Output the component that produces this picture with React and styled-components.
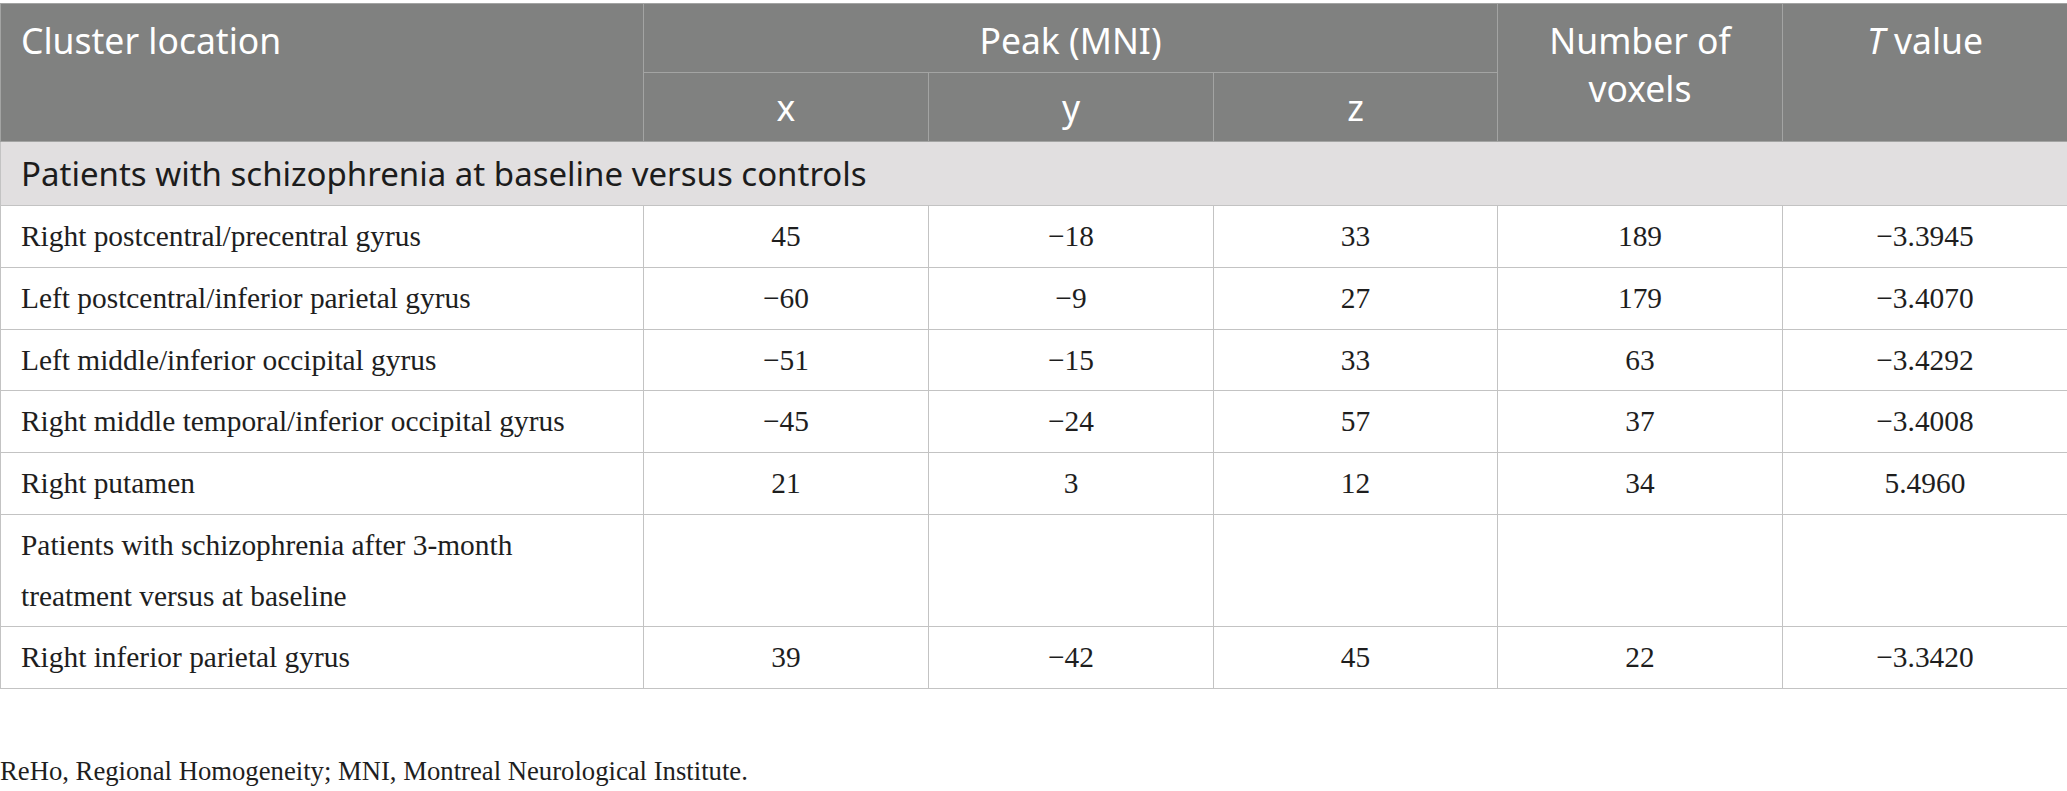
import React from "react";
import styled, {createGlobalStyle} from "styled-components";

const GlobalStyle = createGlobalStyle`
  html, body {
    margin: 0;
    padding: 0;
    background: #ffffff;
  }
`

const Page = styled.div`
  width: 2067px;
  padding-top: 3px;
`

const Table = styled.table`
  width: 2067px;
  border-collapse: collapse;
  table-layout: fixed;
`

const HeadCell = styled.th`
  background-color: #808180;
  color: #ffffff;
  font-family: "Noto Sans", "Open Sans", sans-serif;
  font-weight: 400;
  font-size: 35.5px;
  line-height: 48px;
  text-align: ${props => props.$left ? "left" : "center"};
  vertical-align: ${props => props.$middle ? "middle" : "top"};
  padding: ${props => props.$middle ? "0 20px" : "12px 20px 8px"};
  height: ${props => props.$middle ? "68px" : "auto"};
  border: 1px solid #a3a4a3;

  em {
    font-style: italic;
  }
`

const SectionCell = styled.td`
  background-color: #e1dfe0;
  color: #1c1c1c;
  font-family: "Noto Sans", "Open Sans", sans-serif;
  font-size: 33px;
  line-height: 45px;
  padding: 9px 20px;
  border: 1px solid #c3c3c3;
  text-align: left;
`

const Cell = styled.td`
  font-family: "Liberation Serif", "Times New Roman", serif;
  font-size: 29.4px;
  line-height: 50.75px;
  color: #1e1e1e;
  padding: 5px 20px;
  border: 1px solid #c3c3c3;
  text-align: ${props => props.$left ? "left" : "center"};
  vertical-align: middle;
`

const Footnote = styled.p`
  margin: 66px 0 0;
  font-family: "Liberation Serif", "Times New Roman", serif;
  font-size: 26.7px;
  line-height: 32px;
  color: #1e1e1e;
`

const rows = [
    ["Right postcentral/precentral gyrus", "45", "\u221218", "33", "189", "\u22123.3945"],
    ["Left postcentral/inferior parietal gyrus", "\u221260", "\u22129", "27", "179", "\u22123.4070"],
    ["Left middle/inferior occipital gyrus", "\u221251", "\u221215", "33", "63", "\u22123.4292"],
    ["Right middle temporal/inferior occipital gyrus", "\u221245", "\u221224", "57", "37", "\u22123.4008"],
    ["Right putamen", "21", "3", "12", "34", "5.4960"],
    [<>Patients with schizophrenia after 3-month<br/>treatment versus at baseline</>, "", "", "", "", ""],
    ["Right inferior parietal gyrus", "39", "\u221242", "45", "22", "\u22123.3420"],
]

export default function App(){
    return(
        <Page>
            <GlobalStyle/>
            <Table>
                <colgroup>
                    <col style={{width: "643px"}}/>
                    <col style={{width: "285px"}}/>
                    <col style={{width: "285px"}}/>
                    <col style={{width: "284px"}}/>
                    <col style={{width: "285px"}}/>
                    <col style={{width: "285px"}}/>
                </colgroup>
                <thead>
                    <tr>
                        <HeadCell $left rowSpan={2}>Cluster location</HeadCell>
                        <HeadCell colSpan={3}>Peak (MNI)</HeadCell>
                        <HeadCell rowSpan={2}>Number of<br/>voxels</HeadCell>
                        <HeadCell rowSpan={2}><em>T</em> value</HeadCell>
                    </tr>
                    <tr>
                        <HeadCell $middle>x</HeadCell>
                        <HeadCell $middle>y</HeadCell>
                        <HeadCell $middle>z</HeadCell>
                    </tr>
                </thead>
                <tbody>
                    <tr>
                        <SectionCell colSpan={6}>Patients with schizophrenia at baseline versus controls</SectionCell>
                    </tr>
                    {rows.map((r, i) => (
                        <tr key={i}>
                            {r.map((v, j) => (
                                <Cell key={j} $left={j === 0}>{v}</Cell>
                            ))}
                        </tr>
                    ))}
                </tbody>
            </Table>
            <Footnote>ReHo, Regional Homogeneity; MNI, Montreal Neurological Institute.</Footnote>
        </Page>
    )
}
